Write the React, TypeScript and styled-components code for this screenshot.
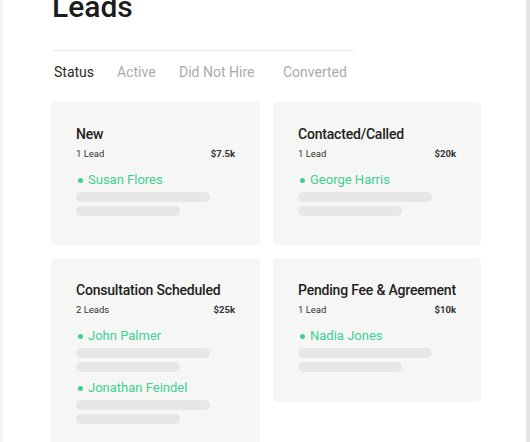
import React from 'react';
import styled, { createGlobalStyle } from 'styled-components';

const GlobalStyle = createGlobalStyle`
  html, body {
    margin: 0;
    padding: 0;
    background: #ffffff;
    font-family: Roboto, "Helvetica Neue", Arial, sans-serif;
    color: #1d1d1f;
    overflow: hidden;
  }
`;

const Frame = styled.div`
  width: 530px;
  height: 442px;
  box-sizing: border-box;
  border-left: 3px solid #f4f4f4;
  border-right: 4px solid #e4e4e4;
  background: #fff;
  overflow: hidden;
`;

const Content = styled.div`
  padding-left: 48px;
  width: 430px;
`;

const Title = styled.h1`
  margin: -11px 0 0 1px;
  font-size: 30px;
  line-height: 36px;
  font-weight: 500;
  color: #1c1c1c;
`;

const Tabs = styled.nav`
  margin-top: 25px;
  width: 300px;
  margin-left: 1px;
  border-top: 1px solid #ececec;
  display: flex;
  padding: 12px 0 0 2px;
  height: 20px;
`;

const Tab = styled.span<{ $active?: boolean; $width: number }>`
  flex: none;
  width: ${({ $width }) => $width}px;
  white-space: nowrap;
  font-size: 14px;
  line-height: 18px;
  color: ${({ $active }) => ($active ? '#2a2a2a' : '#ababab')};
`;

const Grid = styled.div`
  margin-top: 19px;
  display: grid;
  grid-template-columns: 209px 208px;
  column-gap: 13px;
  row-gap: 13px;
  align-items: start;
`;

const Card = styled.section<{ $height: number }>`
  background: #f6f6f4;
  border-radius: 4px;
  height: ${({ $height }) => $height}px;
  box-sizing: border-box;
  padding: 23px 25px 0 25px;
`;

const CardTitle = styled.h2`
  margin: 0;
  font-size: 14px;
  line-height: 18px;
  font-weight: 500;
  letter-spacing: -0.2px;
  color: #222;
  white-space: nowrap;
`;

const Meta = styled.div`
  display: flex;
  justify-content: space-between;
  font-size: 9.5px;
  line-height: 13px;
  margin-top: 4px;
  color: #333;
`;

const Amount = styled.span`
  font-weight: 700;
`;

const Lead = styled.div`
  margin-top: 12px;
  & + & {
    margin-top: 8px;
  }
`;

const Name = styled.div`
  display: flex;
  align-items: center;
  gap: 5px;
  font-size: 13px;
  line-height: 16px;
  color: #40d096;
  padding-left: 2px;
`;

const Dot = styled.span`
  width: 5px;
  height: 5px;
  border-radius: 50%;
  background: #40d096;
`;

const Bar = styled.div<{ $width: number }>`
  width: ${({ $width }) => $width}px;
  height: 10px;
  border-radius: 5px;
  background: #e7e7e5;
  margin-top: 4px;
`;

type Stage = {
  title: string;
  count: string;
  amount: string;
  leads: string[];
  height: number;
};

const stages: Stage[] = [
  { title: 'New', count: '1 Lead', amount: '$7.5k', leads: ['Susan Flores'], height: 143 },
  { title: 'Contacted/Called', count: '1 Lead', amount: '$20k', leads: ['George Harris'], height: 143 },
  {
    title: 'Consultation Scheduled',
    count: '2 Leads',
    amount: '$25k',
    leads: ['John Palmer', 'Jonathan Feindel'],
    height: 200,
  },
  { title: 'Pending Fee & Agreement', count: '1 Lead', amount: '$10k', leads: ['Nadia Jones'], height: 144 },
];

const tabs = [
  { label: 'Status', width: 63, active: true },
  { label: 'Active', width: 62 },
  { label: 'Did Not Hire', width: 104 },
  { label: 'Converted', width: 70 },
];

export default function App() {
  return (
    <>
      <GlobalStyle />
      <Frame>
        <Content>
          <Title>Leads</Title>
          <Tabs>
            {tabs.map((t) => (
              <Tab key={t.label} $active={t.active} $width={t.width}>
                {t.label}
              </Tab>
            ))}
          </Tabs>
          <Grid>
            {stages.map((s) => (
              <Card key={s.title} $height={s.height}>
                <CardTitle>{s.title}</CardTitle>
                <Meta>
                  <span>{s.count}</span>
                  <Amount>{s.amount}</Amount>
                </Meta>
                {s.leads.map((name) => (
                  <Lead key={name}>
                    <Name>
                      <Dot />
                      {name}
                    </Name>
                    <Bar $width={134} />
                    <Bar $width={104} />
                  </Lead>
                ))}
              </Card>
            ))}
          </Grid>
        </Content>
      </Frame>
    </>
  );
}
